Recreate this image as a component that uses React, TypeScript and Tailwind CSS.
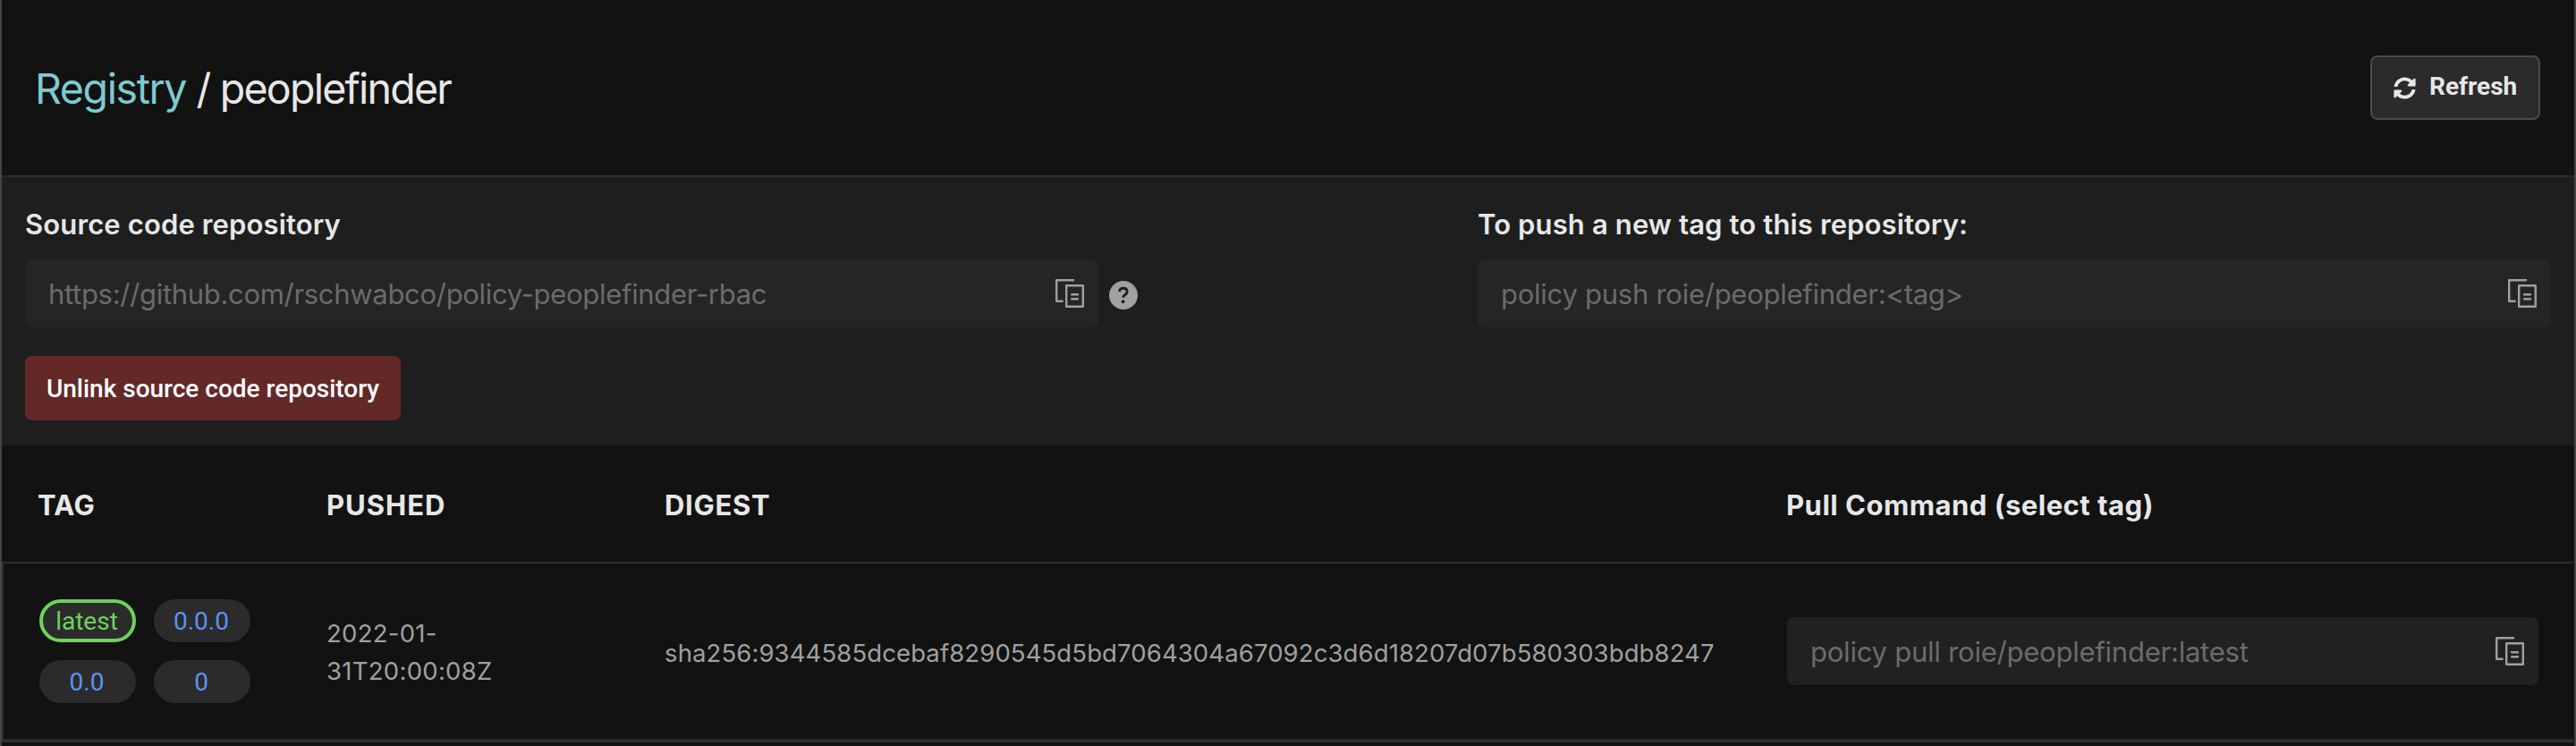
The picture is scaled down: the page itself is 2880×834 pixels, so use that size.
import type { ReactNode } from "react";
import { FaSyncAlt } from "react-icons/fa";

function CopyIcon() {
  return (
    <svg width="32" height="32" viewBox="0 0 32 32" fill="none" stroke="#a0a0a0" strokeWidth="2.4" className="shrink-0">
      <path d="M21 1.2H1.2V24.8H8.6" strokeLinejoin="round" />
      <rect x="12.2" y="7.2" width="18.6" height="23.6" strokeLinejoin="round" />
      <path d="M17.2 17.3H26M17.2 22.3H26" />
    </svg>
  );
}

function HelpIcon() {
  return (
    <svg width="32" height="32" viewBox="0 0 32 32" className="shrink-0">
      <circle cx="16" cy="16" r="16" fill="#a0a0a0" />
      <path d="M11.7 12.1C11.8 9.7 13.4 8.3 15.9 8.3c2.500 0 4.200 1.500 4.200 3.700 0 1.600-.8 2.600-2.300 3.500-1.500.9-2 1.700-2 3.300" fill="none" stroke="#1e1e1e" strokeWidth="2.900" />
      <circle cx="15.600" cy="23.200" r="1.900" fill="#1e1e1e" />
    </svg>
  );
}

function CommandField({ children, className }: { children: ReactNode; className: string }) {
  return (
    <div className={`flex h-[76px] items-center justify-between rounded-lg pr-4 pl-[26px] text-[31px] leading-10 text-[#6b6b6b] ${className}`}>
      {children}
      <CopyIcon />
    </div>
  );
}

function TagChip({ label, selected = false }: { label: string; selected?: boolean }) {
  return (
    <span
      className={`flex h-12 w-[108px] items-center justify-center rounded-full bg-[#2b2b2b] pt-px pr-[2px] font-[Roboto,sans-serif] text-[28px] leading-8 ${
        selected ? "border-4 border-[#6fd15c] text-[#6fd15c]" : "text-[#5c92f7]"
      }`}
    >
      {label}
    </span>
  );
}

export default function App() {
  return (
    <div className="flex h-[834px] w-[2880px] flex-col overflow-hidden border-x-2 border-[#444444] bg-[#121212] font-[Inter,sans-serif] text-[#e7e7e7]">
      <header className="flex h-[198px] shrink-0 items-start justify-between border-b-2 border-[#2d2d2d] pr-[38px] pl-[37px]">
        <h1 className="pt-[69px] text-[46.5px] leading-[60px] tracking-[-1.75px] whitespace-pre">
          <a className="tracking-[-1.4px] text-[#7ecad0]">Registry</a> / peoplefinder
        </h1>
        <button className="mt-[62px] flex h-[72px] w-[190px] items-center rounded-lg border-2 border-[#4a4a4a] bg-[#2b2b2b] pb-[3px] pl-[24px] font-[Roboto,sans-serif] text-[28px] leading-8 font-bold">
          <FaSyncAlt className="mt-[3px] mr-[15px] size-[25px]" />
          Refresh
        </button>
      </header>

      <section className="flex h-[300px] shrink-0 items-start gap-[380px] bg-[#1e1e1e] pt-[33px] pl-[26px]">
        <div className="w-[1244px]">
          <h2 className="text-[31px] leading-10 font-semibold tracking-[0.13px]">Source code repository</h2>
          <div className="mt-[19px] flex items-center gap-3">
            <CommandField className="w-[1200px] bg-[#252525]">
              <span className="pt-[2px] tracking-[-0.31px]">https://github.com/rschwabco/policy-peoplefinder-rbac</span>
            </CommandField>
            <div className="pt-1">
              <HelpIcon />
            </div>
          </div>
          <button className="mt-8 flex h-[72px] w-[420px] items-center justify-center rounded-lg bg-[#622928] pt-[2px] font-[Roboto,sans-serif] text-[28px] leading-8 font-medium text-white">
            Unlink source code repository
          </button>
        </div>
        <div className="w-[1200px]">
          <h2 className="text-[31px] leading-10 font-semibold tracking-[0.13px]">To push a new tag to this repository:</h2>
          <CommandField className="mt-[19px] bg-[#252525]">
            <span className="pt-[2px] tracking-[-0.26px]">{"policy push roie/peoplefinder:<tag>"}</span>
          </CommandField>
        </div>
      </section>

      <div className="grid h-[130px] shrink-0 grid-cols-[323px_378px_1254px_840px] items-center pt-[3px] pl-10 text-[31px] leading-10 font-bold tracking-[0.4px]">
        <span>TAG</span>
        <span className="tracking-[1px]">PUSHED</span>
        <span className="tracking-[0.7px]">DIGEST</span>
        <span className="tracking-[0.5px]">Pull Command (select tag)</span>
      </div>
      <div className="grid h-[202px] shrink-0 grid-cols-[321px_378px_1255px_840px] items-center border-2 border-b-4 border-[#2d2d2d] border-r-transparent pl-10 text-[27.5px] leading-[42px] text-[#a0a0a0]">
        <div className="grid w-[236px] grid-cols-[108px_108px] gap-5">
          <TagChip label="latest" selected />
          <TagChip label="0.0.0" />
          <TagChip label="0.0" />
          <TagChip label="0" />
        </div>
        <div className="w-[200px] pt-[2px] tracking-[0.28px]">
          2022-01-
          <br />
          31T20:00:08Z
        </div>
        <div className="pt-[3px] tracking-[0.11px]">sha256:9344585dcebaf8290545d5bd7064304a67092c3d6d18207d07b580303bdb8247</div>
        <CommandField className="bg-[#212121]">
          <span className="pt-[2px] tracking-[-0.23px]">policy pull roie/peoplefinder:latest</span>
        </CommandField>
      </div>
    </div>
  );
}
